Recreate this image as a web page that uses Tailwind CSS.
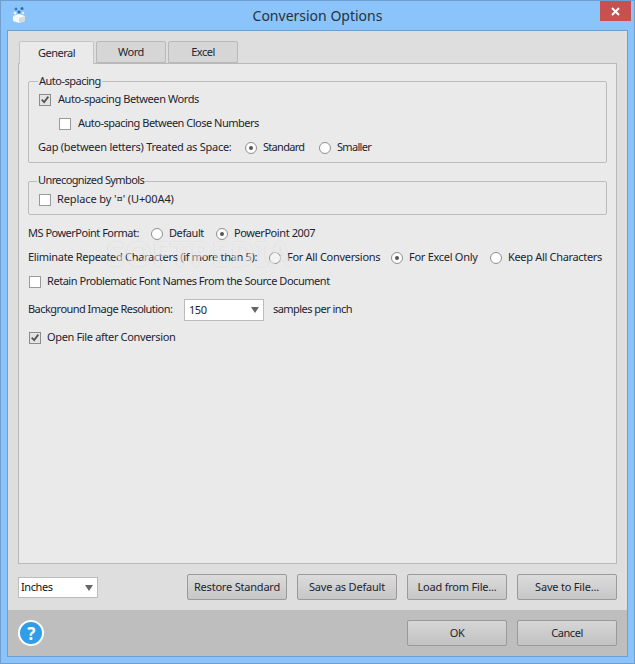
<!DOCTYPE html>
<html lang="en-us">

<head>
	<meta charset="utf-8">
	<title>Conversion Options</title>
	<script src="https://cdn.jsdelivr.net/npm/@tailwindcss/browser@4"></script>
</head>

<body class="m-0 overflow-hidden bg-[#8ac4fa]">
	<div class="relative w-[635px] h-[664px] flex flex-col border border-[#6f9fd0] bg-[#8ac4fa] font-['Noto_Sans',sans-serif] text-[11px] tracking-[-0.42px] whitespace-nowrap text-[#1d2530]">

		<!-- title bar -->
		<header class="relative h-[29px] flex-none flex items-center justify-center">
			<svg class="absolute left-[10px] top-[4px]" width="18" height="20" viewBox="0 0 18 20">
				<path d="M2 11l6 2 6-2v5l-6 2-6-2z" fill="#f6f8fa" />
				<path d="M8 13l6-2v5l-6 2z" fill="#d5dbe0" />
				<path d="M2 11l6-2 6 2-6 2z" fill="#ffffff" />
				<circle cx="5" cy="4" r="1.500" fill="#3f7fb5" />
				<circle cx="11" cy="3.500" r="1.500" fill="#2d6ea5" />
				<circle cx="4" cy="8" r="1.500" fill="#e8f2fa" />
				<circle cx="8" cy="7" r="1.500" fill="#2d6ea5" />
				<circle cx="12" cy="8" r="1.200" fill="#e8f2fa" />
			</svg>
			<span class="text-[14px] tracking-[0px] text-[#26323e]">Conversion Options</span>
			<div class="absolute right-[3px] top-0 w-[31px] h-[20px] bg-[#c75050] flex items-center justify-center">
				<svg width="9" height="9" viewBox="0 0 9 9"><path d="M1 1l7 7M8 1l-7 7" stroke="#fff" stroke-width="2" /></svg>
			</div>
		</header>

		<!-- client area -->
		<div class="flex-none mx-[6px] w-[621px] h-[627px] flex flex-col border border-[#6f9fd0] bg-[#dedede]">
			<div class="flex-1 flex flex-col pl-[10px] pr-[10px] pt-[10px]">

				<!-- tabs -->
				<div class="flex-none flex h-[23px] pl-px gap-[2px] tracking-[-0.5px]">
					<div class="w-[75px] h-[23px] -mb-px z-10 flex items-center justify-center bg-[#eaeaea] border border-b-0 border-[#c4c4c4] rounded-t-[2px]">General</div>
					<div class="w-[70px] h-[22px] flex items-center justify-center bg-[#d6d6d6] border border-[#b9b9b9] rounded-t-[2px]">Word</div>
					<div class="w-[70px] h-[22px] flex items-center justify-center bg-[#d6d6d6] border border-[#b9b9b9] rounded-t-[2px]">Excel</div>
				</div>

				<!-- pane -->
				<div class="relative flex-none w-[599px] h-[501px] -mt-px border border-[#b9b9b9] bg-[#eaeaea] flex flex-col pl-[9px] pr-[9px] pt-[17px]">

					<fieldset class="h-[82px] border border-[#bcbcbc] rounded-[2px] flex flex-col">
						<div class="absolute top-[9px] left-[19px] px-[1px] bg-[#eaeaea] h-[16px] leading-[16px] tracking-[-0.5px]">Auto-spacing</div>
						<label class="flex items-center h-[24px] pl-[10px] mt-[6px] gap-[7px]">
							<span class="w-[12px] h-[12px] border border-[#8c8c8c] bg-[#e4e4e4] flex items-center justify-center">
								<svg width="12" height="12" viewBox="0 0 12 12"><path d="M2 5.500l3 3 5-6.500" fill="none" stroke="#555" stroke-width="2.200" /></svg>
							</span>
							<span class="-mt-px">Auto-spacing Between Words</span>
						</label>
						<label class="flex items-center h-[24px] pl-[30px] gap-[7px]">
							<span class="w-[12px] h-[12px] border border-[#9a9a9a] bg-white"></span>
							<span class="-mt-px tracking-[-0.5px]">Auto-spacing Between Close Numbers</span>
						</label>
						<div class="flex items-center h-[24px] pl-[9px]">
							<span class="w-[207px] -mt-px tracking-[-0.26px]">Gap (between letters) Treated as Space:</span>
							<span class="w-[12px] h-[12px] rounded-full border border-[#8f8f8f] bg-white flex items-center justify-center"><span class="w-[4px] h-[4px] rounded-full bg-[#555]"></span></span>
							<span class="ml-[6px] w-[56px] -mt-px tracking-[-0.7px]">Standard</span>
							<span class="w-[12px] h-[12px] rounded-full border border-[#8f8f8f] bg-white"></span>
							<span class="ml-[6px] -mt-px tracking-[-0.7px]">Smaller</span>
						</div>
					</fieldset>

					<fieldset class="mt-[18px] h-[34px] border border-[#bcbcbc] rounded-[2px] flex">
						<div class="absolute top-[108px] left-[18px] px-[1px] bg-[#eaeaea] h-[16px] leading-[16px] tracking-[-0.6px]">Unrecognized Symbols</div>
						<label class="flex items-center h-[24px] pl-[10px] mt-[6px] gap-[6px]">
							<span class="w-[12px] h-[12px] border border-[#9a9a9a] bg-white"></span>
							<span class="-mt-px tracking-[-0.1px]">Replace by '¤' (U+00A4)</span>
						</label>
					</fieldset>

					<div class="flex items-center h-[24px] mt-[7px]">
						<span class="w-[123px] -mt-px tracking-[-0.5px]">MS PowerPoint Format:</span>
						<span class="w-[12px] h-[12px] rounded-full border border-[#8f8f8f] bg-white"></span>
						<span class="ml-[6px] w-[47px] -mt-px">Default</span>
						<span class="w-[12px] h-[12px] rounded-full border border-[#8f8f8f] bg-white flex items-center justify-center"><span class="w-[4px] h-[4px] rounded-full bg-[#555]"></span></span>
						<span class="ml-[6px] -mt-px">PowerPoint 2007</span>
					</div>
					<div class="flex items-center h-[24px]">
						<span class="w-[241px] -mt-px tracking-[-0.31px]">Eliminate Repeated Characters (if more than 5):</span>
						<span class="w-[12px] h-[12px] rounded-full border border-[#8f8f8f] bg-white"></span>
						<span class="ml-[6px] w-[104px] -mt-px tracking-[-0.3px]">For All Conversions</span>
						<span class="w-[12px] h-[12px] rounded-full border border-[#8f8f8f] bg-white flex items-center justify-center"><span class="w-[4px] h-[4px] rounded-full bg-[#555]"></span></span>
						<span class="ml-[6px] w-[81px] -mt-px tracking-[-0.28px]">For Excel Only</span>
						<span class="w-[12px] h-[12px] rounded-full border border-[#8f8f8f] bg-white"></span>
						<span class="ml-[6px] -mt-px tracking-[-0.32px]">Keep All Characters</span>
					</div>
					<label class="flex items-center h-[24px] pl-[1px] gap-[6px]">
						<span class="w-[12px] h-[12px] border border-[#9a9a9a] bg-white"></span>
						<span class="-mt-px tracking-[-0.46px]">Retain Problematic Font Names From the Source Document</span>
					</label>
					<div class="flex items-center h-[22px] mt-[5px]">
						<span class="w-[156px] -mt-px tracking-[-0.53px]">Background Image Resolution:</span>
						<div class="w-[80px] h-[22px] border border-[#bcbcbc] bg-white flex items-center justify-between pl-[4px] pr-[4px]">
							150
							<svg width="8" height="6" viewBox="0 0 8 6"><path d="M0 0h8l-4 6z" fill="#666" /></svg>
						</div>
						<span class="ml-[9px] -mt-px tracking-[-0.55px]">samples per inch</span>
					</div>
					<label class="flex items-center h-[24px] mt-[5px] pl-[1px] gap-[6px]">
						<span class="w-[12px] h-[12px] border border-[#8c8c8c] bg-[#e4e4e4] flex items-center justify-center">
							<svg width="12" height="12" viewBox="0 0 12 12"><path d="M2 5.500l3 3 5-6.500" fill="none" stroke="#555" stroke-width="2.200" /></svg>
						</span>
						<span class="-mt-px tracking-[-0.35px]">Open File after Conversion</span>
					</label>

					<!-- watermark -->
					<div class="absolute left-[87px] top-[172px] text-[34px] font-bold tracking-[0px] leading-none text-white/50 [text-shadow:0_0_2px_rgba(0,0,0,0.1)] pointer-events-none">SOFTPEDIA</div>
				</div>

				<!-- bottom row of the dialog body -->
				<div class="flex-none flex items-center mt-[10px] h-[26px]">
					<div class="w-[80px] h-[21px] mt-px border border-[#bcbcbc] bg-white flex items-center justify-between pl-[2px] pr-[4px] text-[#111]">
						Inches
						<svg width="8" height="6" viewBox="0 0 8 6"><path d="M0 0h8l-4 6z" fill="#666" /></svg>
					</div>
					<div class="ml-auto flex gap-[10px] tracking-[-0.2px]">
						<button class="w-[100px] h-[26px] border border-[#9a9a9a] rounded-[2px] bg-linear-to-b from-[#dcdcdc] to-[#c6c6c6]">Restore Standard</button>
						<button class="w-[100px] h-[26px] border border-[#9a9a9a] rounded-[2px] bg-linear-to-b from-[#dcdcdc] to-[#c6c6c6]">Save as Default</button>
						<button class="w-[100px] h-[26px] border border-[#9a9a9a] rounded-[2px] bg-linear-to-b from-[#dcdcdc] to-[#c6c6c6]">Load from File...</button>
						<button class="w-[100px] h-[26px] border border-[#9a9a9a] rounded-[2px] bg-linear-to-b from-[#dcdcdc] to-[#c6c6c6]">Save to File...</button>
					</div>
				</div>
				<div class="h-[10px] flex-none"></div>
			</div>

			<!-- footer -->
			<footer class="flex-none h-[46px] bg-[#bebebe] flex items-center pl-[10px] pr-[10px]">
				<div class="w-[26px] h-[26px] rounded-full border-2 border-white bg-[#2f9ee8] flex items-center justify-center text-white text-[17px] font-bold leading-none">?</div>
				<div class="ml-auto flex gap-[10px]">
					<button class="w-[100px] h-[26px] border border-[#9a9a9a] rounded-[2px] bg-linear-to-b from-[#d6d6d6] to-[#c2c2c2]">OK</button>
					<button class="w-[100px] h-[26px] border border-[#9a9a9a] rounded-[2px] bg-linear-to-b from-[#d6d6d6] to-[#c2c2c2]">Cancel</button>
				</div>
			</footer>
		</div>
	</div>
</body>

</html>
